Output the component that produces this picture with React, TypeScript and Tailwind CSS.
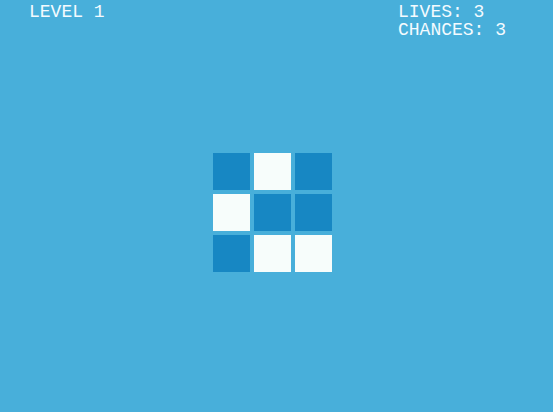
const cells = [
  "dark", "light", "dark",
  "light", "dark", "dark",
  "dark", "light", "light",
];

export default function App() {
  return (
    <div className="h-[412px] w-[553px] bg-[#48afda] text-[#f4fbff] font-['Liberation_Mono',monospace] text-[18px] leading-[18px] flex flex-col">
      <header className="flex pt-[3px]">
        <div className="pl-[29px]">LEVEL 1</div>
        <div className="ml-auto w-[155px]">
          <div>LIVES: 3</div>
          <div>CHANCES: 3</div>
        </div>
      </header>

      <main className="pl-[213px] pt-[114px]">
        <div className="grid grid-cols-[repeat(3,37px)] grid-rows-[repeat(3,37px)] gap-[4px]">
          {cells.map((c, i) => (
            <div key={i} className={c === "dark" ? "bg-[#1787c3]" : "bg-[#f7fdfb]"} />
          ))}
        </div>
      </main>
    </div>
  );
}
